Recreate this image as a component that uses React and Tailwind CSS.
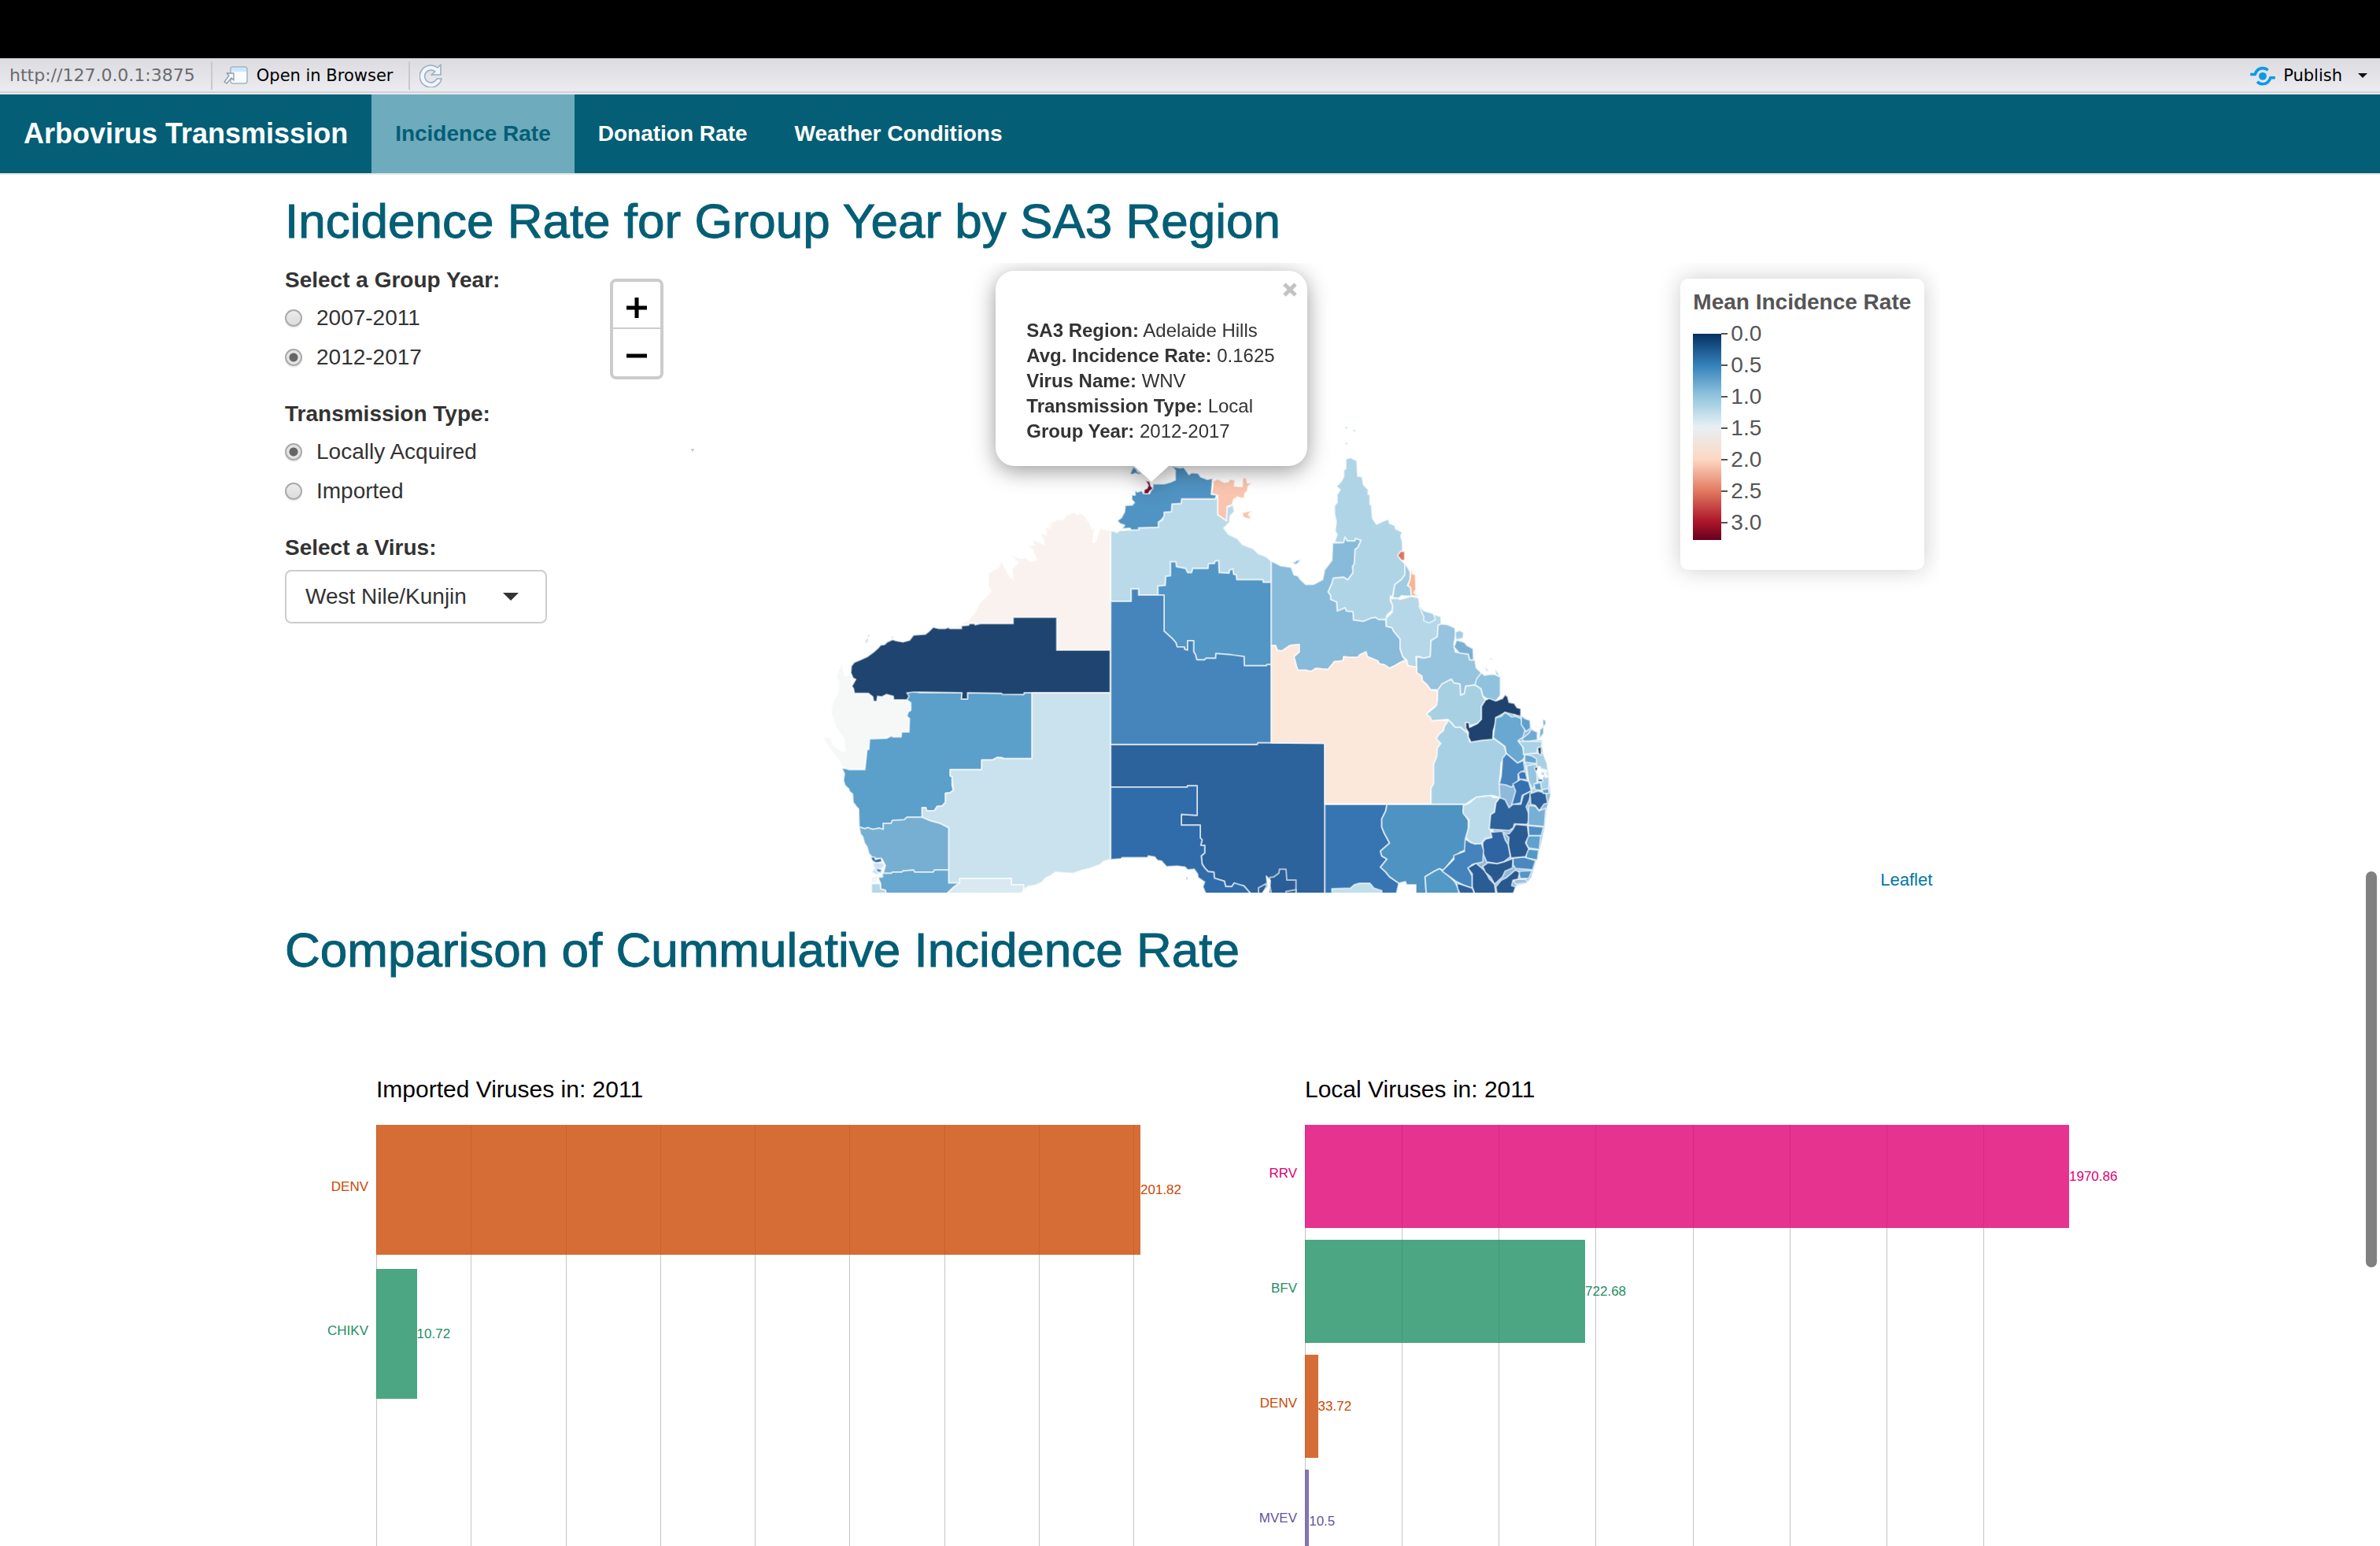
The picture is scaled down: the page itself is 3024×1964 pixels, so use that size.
import React from "react";

/* Region outlines, grouped by the coordinate frame they were digitised in. */
const FRAMES = [
  {
    id: "west",
    transform: "translate(1040 560) scale(0.33333 0.38265)",
    regions: [
      ["#faf2ee", "1116,298 1095,294 1075,290 1068,310 1060,335 1048,338 1052,310 1056,290 1045,292 1040,278 1030,265 1020,254 1015,246 1000,240 990,246 975,236 965,242 950,245 940,258 930,262 918,260 905,265 890,272 885,290 865,286 872,300 870,312 850,305 862,330 862,345 840,335 815,325 825,345 800,350 820,362 825,375 835,395 810,400 790,386 780,392 755,385 735,378 765,405 752,415 740,425 745,460 735,455 725,440 712,420 700,398 690,420 665,432 650,440 650,480 662,500 640,518 615,540 600,570 575,595 540,612 505,618 548,620 548,612 600,608 745,607 745,586 911,586 911,695 1116,695"],
      ["#f6f8f7", "98,735 95,755 105,780 125,780 130,815 140,838 193,838 213,865 225,865 228,850 262,842 288,848 290,860 340,862 355,870 355,895 345,905 352,920 348,967 320,967 318,983 285,983 262,980 260,988 200,990 195,1025 188,1025 180,1090 120,1092 95,1085 80,1060 65,1045 45,1020 30,1000 20,980 50,985 60,1010 90,1030 105,1030 100,990 75,960 65,940 52,905 52,885 65,850 78,840 80,800 70,785 85,750"],
      ["#5b9fcb", "340,837 365,832 390,836 550,836 548,857 571,857 571,836 700,838 785,842 787,836 817,836 817,1055 710,1055 700,1051 685,1051 665,1060 625,1060 625,1092 505,1092 505,1112 512,1115 512,1145 517,1160 505,1168 487,1170 487,1200 475,1212 455,1214 445,1228 415,1228 412,1218 398,1218 398,1250 340,1250 330,1258 285,1260 280,1270 250,1270 250,1290 235,1286 210,1290 190,1284 180,1288 158,1282 156,1222 148,1215 135,1200 133,1172 122,1165 118,1155 105,1145 98,1128 102,1105 92,1088 105,1088 120,1092 180,1092 188,1025 195,1025 198,990 262,988 285,978 285,983 318,983 320,967 348,967 350,922 340,915 345,900 355,895 355,870 340,860"],
      ["#1f446f", "1115,695 911,695 911,586 745,586 745,607 620,607 600,611 598,607 578,607 575,612 548,614 548,623 503,623 500,619 487,623 460,623 440,619 425,632 410,642 365,645 350,662 325,668 300,664 285,660 265,668 255,676 240,678 230,688 215,700 190,716 155,730 140,735 128,748 126,770 135,788 145,792 130,815 136,822 140,838 193,838 210,850 213,865 225,865 228,848 245,850 262,842 288,848 290,860 340,860 348,848 340,837 365,834 390,834 550,836 548,857 571,857 571,836 700,838 705,842 785,842 787,836 1115,836"],
      ["#cae2ed", "817,837 1116,837 1116,1390 1090,1396 1075,1408 1060,1412 1035,1420 1010,1425 975,1436 905,1432 885,1445 870,1450 855,1465 830,1475 800,1480 785,1490 785,1474 738,1474 738,1453 541,1453 541,1468 499,1468 499,1285 465,1270 430,1262 398,1250 398,1218 412,1218 415,1228 445,1228 455,1214 475,1212 487,1200 487,1170 505,1168 517,1160 512,1115 505,1112 505,1092 625,1092 625,1060 665,1060 685,1051 710,1055 817,1055"],
      ["#77afd2", "158,1282 180,1288 190,1284 210,1290 235,1286 250,1290 250,1270 280,1270 285,1260 330,1258 340,1250 398,1250 430,1262 465,1270 499,1285 499,1425 445,1425 440,1432 370,1432 365,1425 325,1428 320,1432 285,1432 280,1436 250,1436 258,1410 245,1388 210,1385 195,1370 188,1348 178,1335 172,1315 163,1305"],
      ["#68a7cf", "499,1425 445,1425 440,1432 370,1432 365,1425 325,1428 320,1432 285,1432 280,1436 245,1436 248,1448 230,1450 240,1470 240,1488 258,1492 260,1505 490,1505 520,1482 541,1468 499,1468"],
      ["#b5d7e7", "205,1470 238,1470 240,1488 258,1492 260,1505 205,1505"],
      ["#dae9f1", "541,1453 738,1453 738,1474 785,1474 785,1488 776,1505 490,1505 520,1480 541,1468"],
      ["#3673b0", "202,1382 216,1382 220,1390 242,1386 244,1398 222,1402 208,1394"],
      ["#cfe3ee", "210,1402 246,1400 256,1410 240,1424 246,1436 222,1440 206,1432 216,1420"],
      ["#4a88bf", "222,1418 244,1424 240,1434 226,1430"],
      ["#f3f4f5", "205,1448 228,1444 230,1466 204,1468"],
      ["#8fa5be", "192,645 198,645 198,650 192,650"],
      ["#8fa5be", "186,658 192,656 190,668 182,672"],
      ["#8fa5be", "282,650 287,650 286,656 281,656"],
    ],
  },
  {
    id: "centre",
    transform: "translate(1380 560) scale(0.33333 0.38265)",
    regions: [
      ["#bbdae9", "97,300 110,300 120,305 130,298 175,296 203,296 203,289 278,287 278,270 295,262 300,237 328,235 330,210 365,208 367,193 495,193 504,185 505,245 538,265 540,222 563,212 568,235 552,250 550,270 528,290 545,310 580,325 600,345 640,358 660,375 690,385 709,400 709,470 678,470 676,461 577,461 575,445 565,443 562,425 550,430 548,440 510,438 508,398 495,400 492,408 470,408 468,424 410,424 405,438 390,438 382,424 347,418 345,402 325,402 325,448 307,450 305,480 277,482 277,512 203,512 203,492 175,492 175,533 97,533"],
      ["#5094c4", "485,125 480,178 500,180 495,193 367,193 365,208 330,210 328,235 300,237 300,250 290,262 278,270 278,287 203,289 203,296 175,296 170,290 140,292 150,280 132,275 122,265 138,255 150,235 152,215 180,213 187,205 177,195 177,180 190,180 190,165 200,170 215,165 222,175 245,175 258,150 258,143 300,143 325,137 343,130 343,98 330,85 360,90 375,88 385,100 395,112 405,106 430,108 440,120 465,128"],
      ["#76122f", "230,132 245,135 250,150 258,158 245,168 240,176 223,175 225,162 235,158 240,148"],
      ["#5094c4", "170,110 182,88 192,92 200,104 215,106 205,112 190,108 180,112"],
      ["#f9c5ae", "487,133 505,127 530,138 545,136 550,128 570,130 568,150 598,152 600,125 612,122 618,140 635,140 620,152 618,165 608,175 606,190 590,190 580,186 565,195 560,212 540,218 538,265 505,245 505,180 482,176 487,150"],
      ["#f9c5ae", "600,238 635,232 622,245 635,260 610,257 600,250"],
      ["#5196c5", "277,512 277,482 305,480 307,450 325,448 325,402 345,402 347,418 382,424 390,438 405,438 410,424 468,424 470,408 492,408 495,400 508,398 510,438 548,440 550,430 562,425 565,443 575,445 577,461 676,461 678,470 709,470 709,743 692,743 690,747 606,747 605,716 560,714 555,710 525,708 498,706 497,722 460,722 455,727 425,727 420,710 413,700 413,664 390,664 390,695 378,692 378,685 350,684 345,670 330,655 300,632 300,512"],
      ["#4685bc", "97,533 175,533 175,492 203,492 203,512 300,512 300,632 330,655 345,670 350,684 378,685 378,692 390,695 390,664 413,664 413,700 420,710 425,727 455,727 460,722 497,722 498,706 555,710 605,716 606,747 690,747 692,743 709,743 709,1003 658,1003 655,1008 97,1008"],
      ["#2d639c", "97,1009 655,1009 658,1003 913,1003 913,1505 632,1505 605,1478 570,1474 568,1468 558,1480 535,1480 530,1462 492,1452 490,1432 468,1430 455,1418 445,1405 442,1378 455,1368 455,1343 440,1343 445,1325 438,1318 438,1276 366,1276 366,1240 426,1243 426,1145 390,1145 388,1150 97,1150"],
      ["#306baa", "97,1150 388,1150 390,1145 426,1145 426,1243 366,1240 366,1276 438,1276 438,1318 445,1325 440,1343 455,1343 455,1368 442,1378 445,1405 455,1418 468,1430 490,1432 492,1452 530,1462 535,1480 558,1480 568,1468 605,1478 632,1505 460,1505 448,1480 455,1465 430,1450 428,1438 415,1422 390,1424 380,1415 350,1412 310,1414 290,1395 275,1393 265,1382 240,1378 238,1383 140,1384 135,1388 97,1390"],
      ["#2a5e99", "703,1450 718,1448 738,1435 740,1422 765,1422 768,1458 803,1458 803,1505 710,1505 703,1475"],
      ["#2d639c", "765,1496 803,1490 803,1505 765,1505"],
      ["#2d639c", "660,1505 660,1484 690,1470 690,1480 675,1505"],
      ["#ffffff", "690,1445 705,1460 700,1505 672,1505 695,1480"],
      ["#88bada", "790,402 820,395 820,400 805,410 792,408"],
      ["#8aa8cb", "384,1448 390,1448 390,1457 384,1457"],
    ],
  },
  {
    id: "east",
    transform: "translate(1600 520) scale(0.33333 0.40816)",
    regions: [
      ["#afd4e6", "333,155 350,150 362,155 375,160 378,208 395,210 400,235 418,250 418,265 425,265 425,295 430,298 435,340 450,358 475,348 495,342 500,355 520,362 522,372 548,382 542,395 548,410 550,438 532,455 545,470 558,480 558,515 545,530 520,545 510,585 503,580 503,597 512,612 510,625 490,640 485,655 460,655 445,648 430,650 400,660 362,656 360,630 335,628 330,618 300,628 298,600 275,592 275,580 265,568 280,540 285,525 325,522 340,530 360,508 358,490 365,480 368,435 378,430 390,408 370,402 368,410 338,410 330,398 325,415 290,413 300,390 292,378 297,350 290,325 290,300 300,290 300,265 312,250 297,240 315,225 325,210 325,190 333,185"],
      ["#88bada", "49,472 85,487 125,492 135,515 150,518 160,530 180,545 210,545 245,530 252,500 280,470 283,416 325,415 330,398 338,410 368,410 370,402 390,408 378,430 368,435 365,480 358,490 360,508 340,530 325,522 285,525 280,540 265,568 275,580 275,592 298,600 300,628 330,618 335,628 360,630 362,656 400,660 430,650 445,648 460,655 485,655 487,675 510,680 515,690 540,715 540,745 550,770 560,780 540,788 520,798 500,806 480,795 460,792 455,783 415,770 410,755 385,765 380,772 345,772 325,770 322,783 290,785 285,790 265,810 240,808 220,806 200,816 180,812 150,812 145,800 135,770 155,755 155,732 120,735 90,752 72,750 65,735 49,735"],
      ["#a0cce3", "558,480 567,490 578,505 578,530 568,548 580,555 583,582 545,580 535,588 512,586 520,545 545,530 558,515"],
      ["#b5d7e8", "503,590 530,588 540,592 583,582 610,587 615,610 620,622 660,635 675,640 695,645 697,668 685,672 682,708 658,720 655,770 630,775 615,770 600,770 603,803 570,798 565,780 550,770 540,745 540,715 515,690 510,680 487,675 487,650 510,632 512,612"],
      ["#a9d0e5", "612,612 632,628 665,635 675,655 650,665 630,658 630,645"],
      ["#96c3de", "697,668 720,670 748,680 752,700 745,730 750,755 800,762 805,780 825,780 830,805 850,820 825,858 790,862 785,885 770,890 768,855 745,852 735,840 700,855 685,873 655,872 640,855 625,845 622,830 603,820 603,770 630,775 655,770 658,720 682,708 685,672"],
      ["#7bb0d4", "755,718 785,725 795,735 818,745 820,780 805,780 800,762 765,758 745,740"],
      ["#a5cee3", "752,692 768,688 782,695 780,712 755,718 750,705"],
      ["#90c2dd", "850,820 862,828 880,825 900,825 922,832 922,890 905,908 870,900 855,893 848,870 825,858 832,838"],
      ["#a8d0e3", "682,875 700,855 735,840 745,852 768,855 770,890 785,885 790,862 825,858 848,870 855,893 865,905 850,925 850,965 835,978 805,985 790,975 797,1008 770,990 750,990 735,975 720,965 690,968 655,970 640,948 660,935 675,925 682,905"],
      ["#fce7db", "49,735 65,735 72,750 90,752 120,735 155,732 155,755 135,770 145,800 150,812 180,812 200,816 220,806 240,808 265,810 285,790 290,785 322,783 325,770 345,772 380,772 385,765 410,755 415,770 455,783 460,792 480,795 500,806 520,798 540,788 562,782 570,798 603,803 603,820 622,830 625,845 640,855 655,872 682,878 680,920 655,935 640,948 655,958 662,970 690,968 725,967 710,985 705,1000 690,1010 678,1025 695,1040 682,1055 680,1080 668,1105 668,1165 658,1180 658,1228 252,1228 252,1040 49,1038"],
      ["#a8d0e4", "725,968 750,990 770,990 797,1008 805,1035 900,1025 915,1035 940,1050 950,1075 925,1100 918,1168 955,1175 975,1185 980,1200 965,1230 940,1210 915,1208 895,1202 850,1205 830,1208 815,1215 790,1229 658,1229 658,1180 668,1165 668,1105 680,1080 682,1055 695,1040 678,1025 690,1010 705,1000 710,985"],
      ["#1f436e", "865,905 880,900 905,908 930,900 940,888 950,895 955,912 975,915 985,928 1000,932 1000,962 985,958 975,950 960,955 940,945 925,958 905,962 905,975 895,1000 893,1027 850,1030 810,1036 800,1020 800,1005 790,992 790,975 802,975 805,990 835,978 850,965 850,925"],
      ["#3675b2", "253,1230 490,1230 485,1250 470,1275 470,1300 480,1320 500,1350 465,1375 470,1390 490,1400 465,1425 485,1440 500,1455 535,1475 525,1510 253,1510"],
      ["#c3deeb", "280,1510 280,1492 350,1490 365,1480 385,1475 425,1475 440,1490 470,1498 470,1510"],
      ["#4e93c2", "490,1230 790,1230 780,1250 800,1280 800,1310 790,1335 795,1370 770,1378 750,1390 705,1435 690,1430 670,1438 635,1455 640,1510 600,1510 600,1480 565,1480 560,1470 535,1475 500,1455 485,1440 465,1425 490,1400 470,1390 465,1375 500,1350 480,1320 470,1300 470,1275 485,1250"],
      ["#5299c6", "635,1455 670,1438 690,1430 705,1438 760,1478 765,1510 640,1510"],
      ["#dd7560", "530,455 542,442 557,442 557,470 545,470"],
      ["#f7b697", "583,497 588,512 598,515 600,560 592,572 612,582 583,580 580,555 570,548 578,530"],
      ["#88bada", "135,478 145,470 160,468 150,480 136,484"],
      ["#bcdaea", "330,54 341,54 341,60 330,60"],
      ["#bcdaea", "360,63 372,63 372,69 360,69"],
      ["#bcdaea", "330,102 341,105 341,111 330,108"],
      ["#bcdaea", "883,774 893,774 893,779 883,779"],
      ["#bcdaea", "862,800 878,812 868,818"],
      ["#bcdaea", "902,808 914,820 918,832 904,826"],
    ],
  },
  {
    id: "south-east",
    transform: "translate(1780 860) scale(0.33333)",
    regions: [
      ["#8fb9da", "365,155 400,135 460,150 495,165 500,195 523,210 523,240 542,240 545,300 566,360 574,450 560,500 552,570 535,650 520,700 500,765 480,788 445,795 430,822 230,822 200,765 250,700 250,620 350,600 380,460 378,408 405,290"],
      ["#a9d0e3", "470,290 545,290 560,330 568,400 565,440 500,440 485,380"],
      ["#bcdbea", "240,490 265,480 290,458 345,452 355,460 380,460 365,480 360,515 345,525 345,560 340,580 352,590 350,612 325,615 310,635 285,637 270,632 250,612 262,570 262,545 240,520"],
      ["#69a8d1", "365,155 385,150 400,135 425,152 440,150 460,158 475,185 475,205 468,230 450,242 465,260 470,280 475,305 465,318 447,328 405,292 400,265 380,250 355,232 360,190"],
      ["#5da0cc", "462,148 478,160 495,165 497,195 480,208 462,182"],
      ["#70aad2", "465,235 490,215 500,200 523,210 523,240 490,245 470,245"],
      ["#7fb5d7", "543,162 555,165 555,180 547,190 547,215 530,238 533,200 545,190"],
      ["#a9d2e6", "450,245 540,245 540,268 525,272 520,290 470,295 470,270"],
      ["#1f436e", "524,270 538,266 538,298 528,292"],
      ["#66a7cf", "475,295 500,300 520,312 520,330 475,325"],
      ["#94c4de", "482,338 520,332 522,400 505,428 490,400"],
      ["#1f436e", "512,344 526,344 526,362 516,358"],
      ["#4784be", "405,292 447,328 470,318 475,355 450,372 450,395 425,420 405,412 378,408 385,380 388,345 390,310"],
      ["#3a76b5", "450,370 462,360 478,362 485,392 455,390"],
      ["#3571b1", "430,408 460,390 490,398 500,435 465,452 460,480 425,488 440,435"],
      ["#2d629b", "380,460 400,468 415,498 430,485 460,485 470,450 500,435 492,470 480,495 490,520 492,545 485,562 435,560 432,575 415,585 370,582 340,580 345,525 360,515 365,480"],
      ["#2d629b", "495,445 525,435 555,442 562,480 548,485 530,510 515,490 498,485"],
      ["#78afd4", "490,490 515,492 530,510 555,500 550,570 488,565"],
      ["#4d8fc3", "488,566 546,572 538,605 490,605"],
      ["#5ea2cd", "485,605 536,605 530,658 490,652 480,635"],
      ["#5299c8", "480,655 528,660 523,698 480,690"],
      ["#4989c0", "430,690 470,686 516,700 505,735 440,730 430,715"],
      ["#5098c8", "450,740 503,738 490,768 458,768"],
      ["#9dc0df", "430,772 480,770 485,785 440,790"],
      ["#2a5a92", "397,595 415,598 430,580 440,562 485,566 490,605 478,632 490,655 478,685 422,690 412,640 415,612"],
      ["#2f64a2", "315,630 325,618 350,612 345,592 390,588 400,620 412,640 420,685 395,705 370,712 330,705 315,670"],
      ["#4483bc", "248,618 270,632 285,637 310,635 318,660 315,705 275,715 260,730 275,760 275,805 245,795 215,780 160,740 205,695 205,680 245,665"],
      ["#2a5c96", "258,728 290,710 325,740 340,770 360,790 365,830 285,830 275,800 275,750"],
      ["#29588f", "315,722 335,708 370,712 395,705 430,692 428,728 400,740 390,762 360,790 345,762 325,745"],
      ["#27598f", "365,800 385,775 405,765 440,735 455,745 450,770 430,775 425,795 440,800 430,830 370,830"],
      ["#2e629e", "215,785 245,795 275,805 285,830 230,830 220,808"],
      ["#5b9fcc", "510,408 535,402 540,432 515,430"],
      ["#3a73ae", "526,388 544,390 542,400 526,398"],
      ["#66a7cf", "540,430 566,425 568,444 546,444"],
      ["#ffffff", "528,340 536,344 534,352 544,350 548,362 538,362 536,372 548,376 540,388 530,384 524,372 520,360"],
      ["#ffffff", "550,352 560,358 556,366 562,380 554,384 550,370"],
    ],
  },
];

function IncidenceMap() {
  return (
    <svg
      className="absolute inset-0 h-full w-full"
      viewBox="756 334 1710 800"
      preserveAspectRatio="xMidYMid slice"
      role="img"
      aria-label="Mean incidence rate by SA3 region"
    >
      {FRAMES.map((frame) => (
        <g key={frame.id} transform={frame.transform}>
          {frame.regions.map(([fill, points], i) => (
            <polygon
              key={i}
              points={points}
              fill={fill}
              stroke="#ffffff"
              strokeOpacity="0.6"
              strokeWidth="2"
              strokeLinejoin="round"
              vectorEffect="non-scaling-stroke"
            />
          ))}
        </g>
      ))}
      <path d="M879 571h4M881 571v3" stroke="#9fb0c6" strokeWidth="1" />
    </svg>
  );
}

function Toolbar() {
  return (
    <div className="flex h-[46px] shrink-0 items-center border-b-2 border-[#e8e8ea] bg-linear-to-b from-[#dbdbe0] to-[#ededf1] px-3 font-['DejaVu_Sans',sans-serif] text-[21px] leading-8 text-black shadow-[inset_0_-2px_0_#d4d4d8]">
      <span className="text-[22px] text-[#6b6b6d]">http://127.0.0.1:3875</span>
      <span className="mr-3.5 ml-5 h-9 w-0.5 bg-[#c9c9cd]" />
      <button type="button" className="flex items-center gap-2.5">
        <svg width="32" height="24" viewBox="0 0 32 24" aria-hidden="true">
          <rect x="9" y="1" width="21" height="21" rx="3" fill="#fafcff" stroke="#9fb3c4" strokeWidth="1.5" />
          <path d="M10 7V4a2 2 0 0 1 2-2h15a2 2 0 0 1 2 2v3z" fill="#cfe6fa" />
          <path d="M4 9h9v9l-3-3-6 7-3-2 6-8z" fill="#f4f8fc" stroke="#8a9cad" strokeWidth="1.3" strokeLinejoin="round" />
        </svg>
        Open in Browser
      </button>
      <span className="mr-3 ml-5 h-9 w-0.5 bg-[#c9c9cd]" />
      <button type="button" aria-label="Refresh">
        <svg width="30" height="30" viewBox="0 0 30 30" aria-hidden="true">
          <path
            d="M27 1v13H15l5-4a8 8 0 1 0 2 9h6A14 14 0 1 1 23 5z"
            fill="#eef5fd"
            stroke="#9aabbd"
            strokeWidth="1.5"
            strokeLinejoin="round"
          />
        </svg>
      </button>
      <button type="button" className="ml-auto flex items-center gap-2.5">
        <svg width="32" height="25" viewBox="240 70 96 76" fill="none" stroke="#0d9ae6" strokeWidth="11" aria-hidden="true">
          <path d="M240 102H258C264 84 276 78 288 78C297 78 303 81 308 86" />
          <path d="M336 115H318C312 132 300 139 288 139C279 139 272 136 267 130" />
          <circle cx="288" cy="109" r="15" fill="#0d9ae6" stroke="none" />
        </svg>
        Publish
      </button>
      <button type="button" aria-label="Publish options" className="ml-5 pr-1">
        <svg width="12" height="6" viewBox="0 0 12 6" aria-hidden="true">
          <path d="M0 0h12L6 6z" fill="#111" />
        </svg>
      </button>
    </div>
  );
}

function Navbar() {
  return (
    <nav className="flex h-[102px] shrink-0 border-b-2 border-[#e7e7e7] bg-[#045e75] text-[28px] font-bold text-white">
      <a href="#top" className="flex items-center px-[30px] text-[36px]">Arbovirus Transmission</a>
      <a href="#incidence" aria-current="page" className="flex items-center bg-[#6eabbd] px-[30px] text-[#045e75]">Incidence Rate</a>
      <a href="#donation" className="flex items-center px-[30px]">Donation Rate</a>
      <a href="#weather" className="flex items-center px-[30px]">Weather Conditions</a>
    </nav>
  );
}

function RadioGroup({ legend, name, options, selected }) {
  return (
    <fieldset className="mb-8">
      <legend className="h-10 font-bold">{legend}</legend>
      <div className="flex flex-col gap-2.5 pt-2">
        {options.map((option) => (
          <label key={option} className="flex h-10 items-center gap-[18px]">
            <input
              type="radio"
              name={name}
              defaultChecked={option === selected}
              className="size-[22px] appearance-none rounded-full border-2 border-[#aaaaaa] bg-linear-to-b from-[#ececec] to-[#dcdcdc] shadow-[0_2px_1px_#eeeeee] checked:bg-[radial-gradient(circle,#666666_5px,#e4e4e4_6px)]"
            />
            {option}
          </label>
        ))}
      </div>
    </fieldset>
  );
}

function Controls() {
  return (
    <form className="col-span-2 px-[30px] pt-0.5 text-[28px] leading-10 text-[#333333]">
      <RadioGroup legend="Select a Group Year:" name="year" options={["2007-2011", "2012-2017"]} selected="2012-2017" />
      <RadioGroup legend="Transmission Type:" name="transmission" options={["Locally Acquired", "Imported"]} selected="Locally Acquired" />
      <label htmlFor="virus" className="block font-bold">Select a Virus:</label>
      <div className="mt-2 grid items-center">
        <select id="virus" className="col-start-1 row-start-1 h-[68px] w-full appearance-none rounded-lg border-2 border-[#cccccc] bg-white px-6">
          <option>West Nile/Kunjin</option>
        </select>
        <svg className="pointer-events-none col-start-1 row-start-1 mr-9 justify-self-end" width="20" height="10" viewBox="0 0 20 10" aria-hidden="true">
          <path d="M0 0h20L10 10z" fill="#333" />
        </svg>
      </div>
    </form>
  );
}

const TICKS = ["0.0", "0.5", "1.0", "1.5", "2.0", "2.5", "3.0"];

function Legend() {
  return (
    <div className="absolute top-5 right-5 h-[370px] w-[310px] rounded-[10px] bg-white px-4 pt-2.5 text-[28px] leading-10 text-[#555555] shadow-[0_0_30px_rgba(0,0,0,0.2)]">
      <div className="font-bold whitespace-nowrap">Mean Incidence Rate</div>
      <div className="flex pt-5">
        <div className="h-[262px] w-9 bg-[linear-gradient(to_bottom,#053061_0%,#3480b9_15%,#90c4de_30%,#e7f0f4_45%,#fdd7c2_61%,#e27b62_76%,#ad162a_91%,#67001f_100%)]" />
        <div className="-mt-5">
          {TICKS.map((tick) => (
            <div key={tick} className="flex h-10 items-center gap-1">
              <span className="h-0.5 w-2 bg-[#555555]" />
              {tick}
            </div>
          ))}
        </div>
      </div>
    </div>
  );
}

const POPUP = [
  ["SA3 Region:", "Adelaide Hills"],
  ["Avg. Incidence Rate:", "0.1625"],
  ["Virus Name:", "WNV"],
  ["Transmission Type:", "Local"],
  ["Group Year:", "2012-2017"],
];

function Popup() {
  return (
    <div className="absolute top-2.5 left-[calc(50%-345px)] w-[396px] drop-shadow-[0_6px_14px_rgba(0,0,0,0.4)]">
      <div className="h-[248px] rounded-3xl bg-white pt-[60px] pl-[39px] text-[24px] leading-8 text-[#333333]">
        {POPUP.map(([label, value]) => (
          <p key={label}>
            <b>{label}</b> {value}
          </p>
        ))}
      </div>
      <svg className="mx-auto block" width="44" height="20" viewBox="0 0 44 20" aria-hidden="true">
        <path d="M0 0h44L22 20z" fill="#fff" />
      </svg>
      <button type="button" aria-label="Close popup" className="absolute top-[15px] right-[13px]">
        <svg width="18" height="18" viewBox="0 0 18 18" aria-hidden="true">
          <path d="M2 2l14 14M16 2L2 16" stroke="#c3c3c3" strokeWidth="5" />
        </svg>
      </button>
    </div>
  );
}

function MapPanel() {
  return (
    <div className="col-span-9 px-[30px]">
      <div className="relative h-[800px] overflow-hidden">
        <IncidenceMap />
        <div className="absolute top-5 left-5 flex w-[68px] flex-col rounded-lg border-4 border-[#cccccc] bg-white">
          <button type="button" aria-label="Zoom in" className="flex h-[60px] items-center justify-center border-b-2 border-[#cccccc] pt-2">
            <svg width="26" height="26" viewBox="0 0 26 26" aria-hidden="true">
              <path d="M0 13h26M13 0v26" stroke="#000" strokeWidth="5" />
            </svg>
          </button>
          <button type="button" aria-label="Zoom out" className="flex h-[60px] items-center justify-center">
            <svg width="26" height="26" viewBox="0 0 26 26" aria-hidden="true">
              <path d="M0 17h26" stroke="#000" strokeWidth="5" />
            </svg>
          </button>
        </div>
        <Popup />
        <Legend />
        <a href="#leaflet" className="absolute right-2.5 bottom-0 text-[22px] leading-8 text-[#0078a8]">Leaflet</a>
      </div>
    </div>
  );
}

function BarChart({ title, rows, step, rowClass, gapClass }) {
  const max = rows[0].value;
  const columns = Math.floor(max / step) + 1;
  return (
    <section className="px-[30px]">
      <h3 className="pl-[116px] text-[30px] leading-10 text-black">{title}</h3>
      <div className="relative mt-[25px] h-[700px] pr-[33px] text-[17px] leading-6">
        <div className="absolute inset-y-0 right-[33px] left-[116px] flex" aria-hidden="true">
          {Array.from({ length: columns }, (_, i) => (
            <div key={i} className="shrink-0 border-l border-[#c4c4c4]" style={{ width: `${(step / max) * 100}%` }} />
          ))}
        </div>
        <div className={gapClass}>
          {rows.map((row) => (
            <div key={row.name} className={rowClass}>
              <span className={`${row.text} pb-2 text-right`}>{row.name}</span>
              <div className="flex h-full items-center">
                <div className={`${row.bar} h-full shrink-0`} style={{ width: `${(row.value / max) * 100}%` }} />
                <span className={row.text}>{row.value}</span>
              </div>
            </div>
          ))}
        </div>
      </div>
    </section>
  );
}

const ORANGE = { text: "text-[#cc4804]", bar: "bg-[#cc4804]/80" };
const GREEN = { text: "text-[#1f8e64]", bar: "bg-[#1f8e64]/80" };
const PINK = { text: "text-[#e00073]", bar: "bg-[#e00074]/80" };
const PURPLE = { text: "text-[#66539e]", bar: "bg-[#66539e]/80" };

export default function App() {
  return (
    <div className="relative flex h-screen flex-col overflow-hidden bg-white font-['Liberation_Sans',Arial,sans-serif]">
      <div className="h-[74px] shrink-0 bg-black" />
      <Toolbar />
      <Navbar />
      <main className="mx-auto w-full max-w-[2360px] pt-[26px]">
        <h2 className="mb-5 px-[30px] text-[62px] leading-[66px] text-[#045e75] [-webkit-text-stroke:1px_#045e75]">
          Incidence Rate for Group Year by SA3 Region
        </h2>
        <div className="grid grid-cols-12">
          <Controls />
          <MapPanel />
        </div>
        <h2 className="mt-10 px-[30px] text-[62px] leading-[66px] text-[#045e75] [-webkit-text-stroke:1px_#045e75]">
          Comparison of Cummulative Incidence Rate
        </h2>
        <div className="mt-[124px] grid grid-cols-2">
          <BarChart
            title="Imported Viruses in: 2011"
            step={25}
            gapClass="relative flex flex-col gap-[18px]"
            rowClass="grid h-[165px] grid-cols-[106px_1fr] items-center gap-2.5"
            rows={[
              { name: "DENV", value: 201.82, ...ORANGE },
              { name: "CHIKV", value: 10.72, ...GREEN },
            ]}
          />
          <BarChart
            title="Local Viruses in: 2011"
            step={250}
            gapClass="relative flex flex-col gap-[15px]"
            rowClass="grid h-[131px] grid-cols-[106px_1fr] items-center gap-2.5"
            rows={[
              { name: "RRV", value: 1970.86, ...PINK },
              { name: "BFV", value: 722.68, ...GREEN },
              { name: "DENV", value: 33.72, ...ORANGE },
              { name: "MVEV", value: 10.5, ...PURPLE },
            ]}
          />
        </div>
      </main>
      <div className="absolute top-[1107px] right-1 h-[503px] w-3.5 rounded-full bg-[#808080]" aria-hidden="true" />
    </div>
  );
}
